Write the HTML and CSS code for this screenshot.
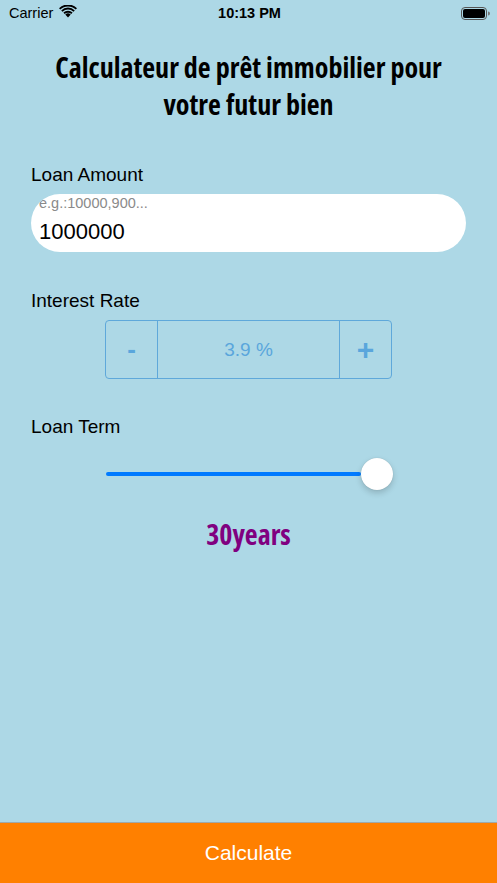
FILE: index.html
```html
<!DOCTYPE html>
<html lang="fr">
<head>
<meta charset="utf-8">
<title>Loan Calculator</title>
<link rel="stylesheet" href="styles.css">
</head>
<body>
<div class="screen">
  <div class="status-bar">
    <div class="status-left">
      <span class="carrier">Carrier</span>
      <svg class="wifi" width="18" height="13" viewBox="0 0 18 13">
        <path d="M9 12.5 L6.3 9.6 A3.9 3.9 0 0 1 11.7 9.6 Z" fill="#000"/>
        <path d="M4.4 7.6 A6.6 6.6 0 0 1 13.6 7.6 L12.3 9 A4.7 4.7 0 0 0 5.7 9 Z" fill="#000"/>
        <path d="M2.2 5.4 A9.7 9.7 0 0 1 15.8 5.4 L14.5 6.8 A7.8 7.8 0 0 0 3.5 6.8 Z" fill="#000"/>
        <path d="M0 3.2 A12.8 12.8 0 0 1 18 3.2 L16.7 4.6 A10.9 10.9 0 0 0 1.3 4.6 Z" fill="#000"/>
      </svg>
    </div>
    <div class="status-time">10:13 PM</div>
    <div class="status-right">
      <svg class="battery" width="29" height="13" viewBox="0 0 29 13">
        <rect x="0.5" y="0.5" width="25" height="12" rx="3.5" fill="none" stroke="#555" stroke-width="1"/>
        <rect x="2" y="2" width="22" height="9" rx="2" fill="#000"/>
        <path d="M27 4.5 A2 2 0 0 1 27 8.5 Z" fill="#777"/>
      </svg>
    </div>
  </div>

  <h1 class="title">Calculateur de prêt immobilier pour<br>votre futur bien</h1>

  <div class="section amount-section">
    <div class="label">Loan Amount</div>
    <div class="amount-field">
      <span class="placeholder">e.g.:10000,900...</span>
      <span class="amount-value">1000000</span>
    </div>
  </div>

  <div class="section rate-section">
    <div class="label">Interest Rate</div>
    <div class="stepper">
      <div class="step-btn minus">-</div>
      <div class="step-value">3.9 %</div>
      <div class="step-btn plus">+</div>
    </div>
  </div>

  <div class="section term-section">
    <div class="label">Loan Term</div>
    <div class="slider">
      <div class="slider-track"></div>
      <div class="slider-thumb"></div>
    </div>
    <div class="years">30years</div>
  </div>

  <div class="spacer"></div>

  <div class="calculate">Calculate</div>
</div>
</body>
</html>
```

FILE: styles.css
```css
* { box-sizing: border-box; }
html, body {
  margin: 0;
  padding: 0;
  width: 497px;
  height: 883px;
  overflow: hidden;
  background: #add8e6;
  font-family: "Liberation Sans", Arial, sans-serif;
}
.screen {
  display: flex;
  flex-direction: column;
  height: 883px;
}
.status-bar {
  height: 26px;
  display: grid;
  grid-template-columns: 1fr auto 1fr;
  align-items: center;
  padding: 0 7px 0 9px;
}
.status-left {
  display: flex;
  align-items: center;
  gap: 6px;
}
.carrier {
  font-size: 14.5px;
  color: #000;
}
.wifi { margin-top: -3px; }
.status-time {
  font-size: 14.5px;
  font-weight: bold;
  color: #000;
}
.status-right {
  display: flex;
  justify-content: flex-end;
}
.title {
  margin: 23px 0 0;
  text-align: center;
  white-space: nowrap;
  font-family: "Open Sans", "DejaVu Sans Condensed", sans-serif;
  font-stretch: 75%;
  font-weight: bold;
  font-size: 28px;
  line-height: 37px;
  color: #000;
}
.section {
  display: flex;
  flex-direction: column;
  padding: 0 31px;
}
.label {
  font-family: "Liberation Sans", Arial, sans-serif;
  font-size: 19px;
  color: #000;
  line-height: 22px;
}
.amount-section { margin-top: 41px; }
.amount-field {
  margin-top: 8px;
  height: 58px;
  background: #fff;
  border-radius: 29px;
  display: flex;
  flex-direction: column;
  padding: 0 8px;
  overflow: hidden;
}
.placeholder {
  font-size: 14.5px;
  color: #8a8a8a;
  line-height: 16px;
  margin-top: 1px;
}
.amount-value {
  font-size: 22px;
  color: #000;
  line-height: 24px;
  margin-top: 9px;
}
.rate-section { margin-top: 38px; }
.stepper {
  margin: 8px 0 0 74px;
  width: 287px;
  height: 59px;
  border: 1.5px solid #5fa8da;
  border-radius: 4px;
  display: flex;
  color: #5aa6dc;
}
.step-btn {
  width: 52px;
  display: flex;
  align-items: center;
  justify-content: center;
  font-size: 26px;
  font-weight: bold;
}
.step-btn.plus { font-size: 30px; }
.step-btn.minus { border-right: 1.5px solid #5fa8da; }
.step-btn.plus { border-left: 1.5px solid #5fa8da; }
.step-value {
  flex: 1;
  display: flex;
  align-items: center;
  justify-content: center;
  font-size: 19px;
}
.term-section { margin-top: 37px; }
.slider {
  margin: 20px 0 0 75px;
  width: 287px;
  height: 32px;
  display: flex;
  align-items: center;
}
.slider-track {
  flex: 1;
  height: 4px;
  border-radius: 2px;
  background: #007aff;
}
.slider-thumb {
  width: 32px;
  height: 32px;
  border-radius: 50%;
  background: #fff;
  box-shadow: 0 3px 6px rgba(0, 0, 0, 0.18), 0 0 1px rgba(0, 0, 0, 0.2);
}
.years {
  margin-top: 27px;
  text-align: center;
  font-family: "Open Sans", "DejaVu Sans Condensed", sans-serif;
  font-stretch: 75%;
  font-weight: bold;
  font-size: 28px;
  color: #800080;
  line-height: 34px;
}
.spacer { flex: 1; }
.calculate {
  height: 61px;
  background: #ff8000;
  border-top: 1px solid #a0a8a8;
  color: #fff;
  font-size: 21px;
  display: flex;
  align-items: center;
  justify-content: center;
}
```
